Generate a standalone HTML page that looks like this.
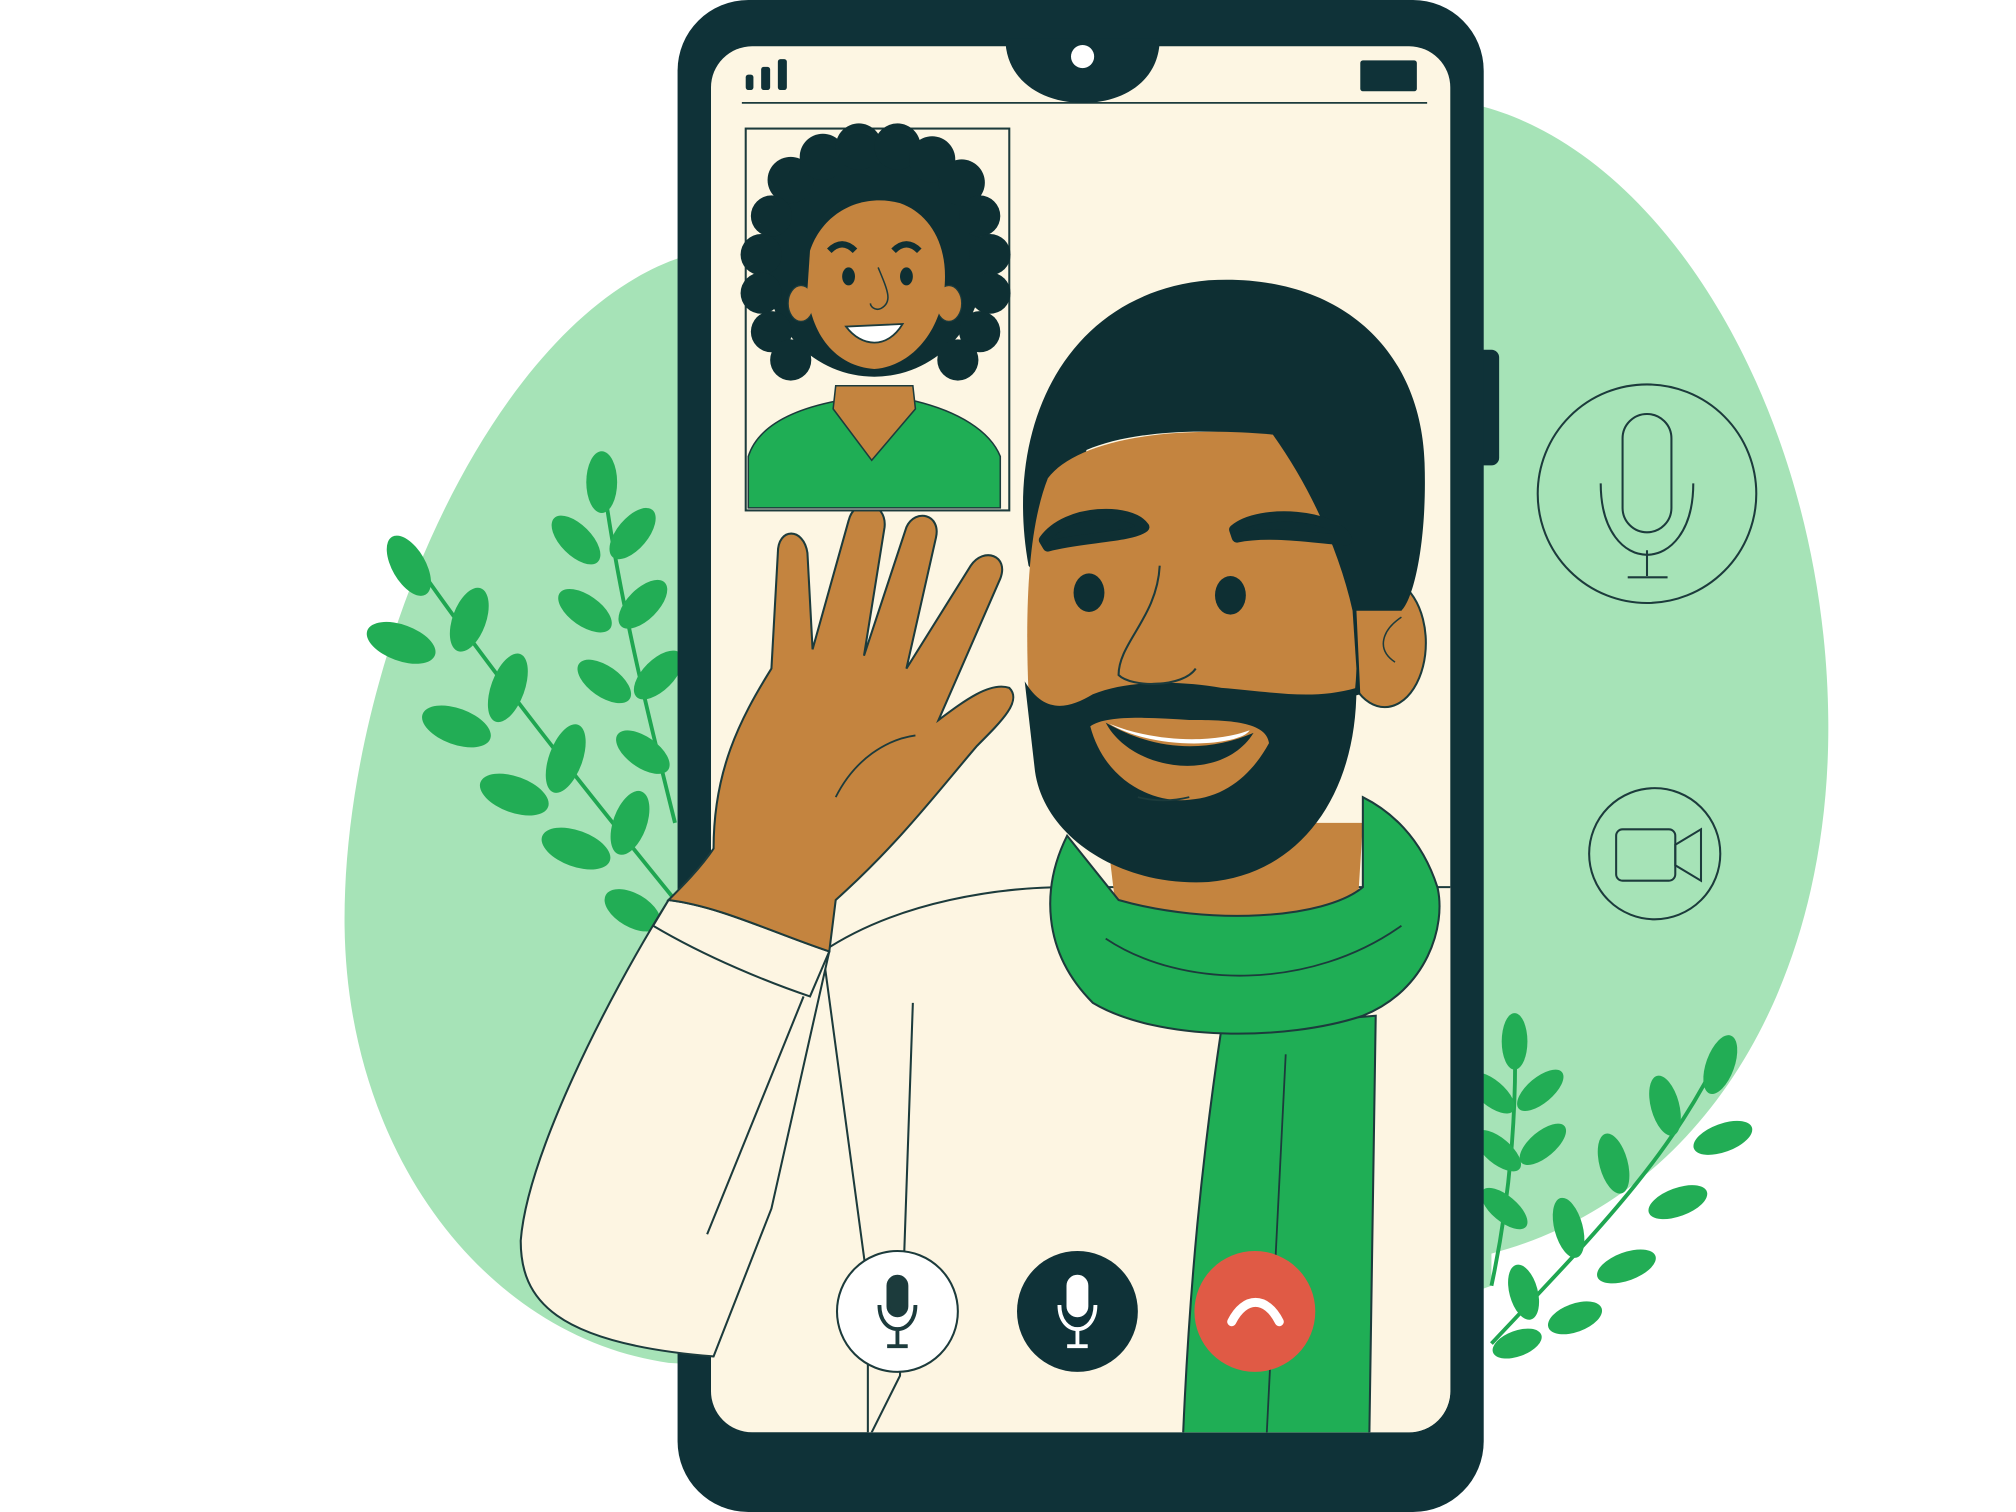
<!DOCTYPE html>
<html><head><meta charset="utf-8"><style>
html,body{margin:0;padding:0;background:#fff;width:2016px;height:1512px;overflow:hidden}
svg{display:block}
</style></head><body>
<svg width="2016" height="1512" viewBox="0 0 1568 1176" preserveAspectRatio="none" xmlns="http://www.w3.org/2000/svg">
<rect width="1568" height="1176" fill="#fff"/>
<path d="M1150,82 C1300,120 1420,330 1422,560 C1424,760 1330,930 1160,975 L1160,1000 C1000,1060 700,1070 520,1060 C380,1040 270,900 268,720 C266,520 380,250 530,200 L1150,82 Z" fill="#a6e3b7"/>
<g stroke="#1fa651" stroke-width="3" fill="none">
<path d="M525,700 C460,620 380,520 318,430"/>
<path d="M525,640 C505,560 480,460 468,365"/>
<path d="M1160,1045 C1240,960 1300,900 1340,815"/>
<path d="M1160,1000 C1175,930 1180,860 1178,800"/>
</g>
<g fill="#22ad55">
<ellipse cx="318" cy="440" rx="13" ry="26" transform="rotate(-30 318 440)"/>
<ellipse cx="312" cy="500" rx="14" ry="28" transform="rotate(-70 312 500)"/>
<ellipse cx="365" cy="482" rx="13" ry="26" transform="rotate(20 365 482)"/>
<ellipse cx="355" cy="565" rx="14" ry="28" transform="rotate(-70 355 565)"/>
<ellipse cx="395" cy="535" rx="13" ry="28" transform="rotate(20 395 535)"/>
<ellipse cx="400" cy="618" rx="14" ry="28" transform="rotate(-70 400 618)"/>
<ellipse cx="440" cy="590" rx="13" ry="28" transform="rotate(20 440 590)"/>
<ellipse cx="448" cy="660" rx="14" ry="28" transform="rotate(-70 448 660)"/>
<ellipse cx="490" cy="640" rx="13" ry="26" transform="rotate(20 490 640)"/>
<ellipse cx="492" cy="708" rx="13" ry="24" transform="rotate(-60 492 708)"/>
<ellipse cx="468" cy="375" rx="12" ry="24"/>
<ellipse cx="448" cy="420" rx="12" ry="24" transform="rotate(-45 448 420)"/>
<ellipse cx="492" cy="415" rx="12" ry="24" transform="rotate(40 492 415)"/>
<ellipse cx="455" cy="475" rx="12" ry="24" transform="rotate(-55 455 475)"/>
<ellipse cx="500" cy="470" rx="12" ry="24" transform="rotate(45 500 470)"/>
<ellipse cx="470" cy="530" rx="12" ry="24" transform="rotate(-55 470 530)"/>
<ellipse cx="512" cy="525" rx="12" ry="24" transform="rotate(45 512 525)"/>
<ellipse cx="500" cy="585" rx="12" ry="24" transform="rotate(-55 500 585)"/>
<ellipse cx="1178" cy="810" rx="10" ry="22"/>
<ellipse cx="1160" cy="850" rx="10" ry="22" transform="rotate(-50 1160 850)"/>
<ellipse cx="1198" cy="848" rx="10" ry="22" transform="rotate(50 1198 848)"/>
<ellipse cx="1165" cy="895" rx="10" ry="22" transform="rotate(-50 1165 895)"/>
<ellipse cx="1200" cy="890" rx="10" ry="22" transform="rotate(50 1200 890)"/>
<ellipse cx="1170" cy="940" rx="10" ry="22" transform="rotate(-50 1170 940)"/>
<ellipse cx="1338" cy="828" rx="11" ry="24" transform="rotate(20 1338 828)"/>
<ellipse cx="1340" cy="885" rx="11" ry="24" transform="rotate(70 1340 885)"/>
<ellipse cx="1295" cy="860" rx="11" ry="24" transform="rotate(-15 1295 860)"/>
<ellipse cx="1305" cy="935" rx="11" ry="24" transform="rotate(70 1305 935)"/>
<ellipse cx="1255" cy="905" rx="11" ry="24" transform="rotate(-15 1255 905)"/>
<ellipse cx="1265" cy="985" rx="11" ry="24" transform="rotate(70 1265 985)"/>
<ellipse cx="1220" cy="955" rx="11" ry="24" transform="rotate(-15 1220 955)"/>
<ellipse cx="1225" cy="1025" rx="11" ry="22" transform="rotate(70 1225 1025)"/>
<ellipse cx="1185" cy="1005" rx="11" ry="22" transform="rotate(-15 1185 1005)"/>
<ellipse cx="1180" cy="1045" rx="10" ry="20" transform="rotate(70 1180 1045)"/>
</g>
<g fill="none" stroke="#1c3b3c" stroke-width="1.6">
<circle cx="1281" cy="384" r="85"/>
<rect x="1262" y="322" width="38" height="92" rx="19"/>
<path d="M1245,376 C1245,450 1317,450 1317,376"/>
<path d="M1281,428 L1281,448 M1266,449 L1297,449"/>
<circle cx="1287" cy="664" r="51"/>
<rect x="1257" y="645" width="46" height="40" rx="5"/>
<path d="M1303,657 L1323,645 L1323,685 L1303,673 Z"/>
</g>
<rect x="1148" y="272" width="18" height="90" rx="6" fill="#0f3238"/>
<rect x="527" y="0" width="627" height="1176" rx="55" fill="#0f3238"/>
<defs><clipPath id="scr"><rect x="553" y="36" width="575" height="1078" rx="32"/></clipPath></defs>
<rect x="553" y="36" width="575" height="1078" rx="32" fill="#fdf6e3"/>
<g clip-path="url(#scr)">
<path d="M640,740 C700,700 780,690 830,690 L1130,690 L1130,1120 L675,1120 L675,1000 Z" fill="#fdf5e2" stroke="#1c3b3c" stroke-width="1.6"/>
<path d="M675,1120 L700,1070 L710,780" fill="none" stroke="#1c3b3c" stroke-width="1.6"/>
<path d="M950,800 L1070,790 L1065,1120 L920,1120 C925,1000 935,900 950,800 Z" fill="#1fae55" stroke="#1c3b3c" stroke-width="1.6"/>
<path d="M1000,820 L985,1120" stroke="#1c3b3c" stroke-width="1.4"/>
<path d="M860,640 L1060,640 L1055,720 C1000,740 920,745 870,725 Z" fill="#c4843f"/>
<path d="M870,700 C930,720 1000,720 1050,700 L1050,720 C1000,740 920,740 870,725 Z" fill="#a86a2f"/>
<path d="M830,650 C810,690 810,740 850,780 C900,810 1000,810 1060,790 C1110,770 1125,720 1118,690 C1105,650 1080,630 1060,620 L1060,690 C1030,715 940,720 870,700 Z" fill="#1fae55" stroke="#1c3b3c" stroke-width="1.6"/>
<path d="M860,730 C920,770 1020,770 1090,720" fill="none" stroke="#1c3b3c" stroke-width="1.4"/>
<ellipse cx="1077" cy="500" rx="32" ry="50" fill="#c4843f" stroke="#1c3b3c" stroke-width="1.6"/>
<path d="M1090,480 C1075,490 1070,505 1085,515" fill="none" stroke="#1c3b3c" stroke-width="1.2"/>
<!-- hair -->
<path d="M800,440 C780,330 830,228 940,218 C1040,212 1105,270 1108,360 C1110,420 1100,465 1090,475 L1055,475 L1058,540 L1040,545 L1030,430 C1020,390 1005,360 990,340 C940,332 880,335 845,350 L825,470 Z" fill="#0e2f33"/>
<!-- face -->
<path d="M815,372 C835,345 900,330 990,338 C1020,380 1042,430 1052,475 L1055,520 C1052,610 1000,680 930,685 C860,685 808,625 800,540 C797,470 800,410 815,372 Z" fill="#c4843f"/>
<!-- beard -->
<path d="M797,530 C812,555 830,552 850,540 C880,528 920,530 950,535 C990,538 1020,545 1055,535 C1055,620 1010,680 940,686 C870,690 812,650 805,600 Z" fill="#0e2f33"/>
<path d="M848,565 C860,610 900,625 925,622 C955,620 975,600 987,578 C985,560 950,560 925,560 C895,558 860,556 848,565 Z" fill="#c4843f"/>
<path d="M860,562 C880,600 950,610 975,570 C940,585 900,585 860,562 Z" fill="#0e2f33"/>
<path d="M863,563 C900,578 945,578 972,568 C965,580 900,585 863,563 Z" fill="#fff"/>
<path d="M885,620 Q905,625 925,620" stroke="#1c3b3c" stroke-width="1.4" fill="none"/>
<path d="M812,420 C830,395 880,395 890,410 C880,418 840,418 815,425 Z" fill="#0e2f33" stroke="#0e2f33" stroke-width="8" stroke-linejoin="round"/>
<path d="M960,412 C980,395 1040,400 1048,420 C1030,420 990,412 962,418 Z" fill="#0e2f33" stroke="#0e2f33" stroke-width="8" stroke-linejoin="round"/>
<ellipse cx="847" cy="461" rx="12" ry="15" fill="#0e2f33"/>
<ellipse cx="957" cy="463" rx="12" ry="15" fill="#0e2f33"/>
<path d="M902,440 C900,480 870,500 870,525 C880,535 920,535 930,520" fill="none" stroke="#1c3b3c" stroke-width="1.6"/>
</g>
<!-- arm (overlaps phone frame) -->
<path d="M520,700 C470,780 410,900 405,965 C405,1010 430,1045 555,1055 L600,940 L645,740 C610,720 560,705 520,700 Z" fill="#fdf5e2" stroke="#1c3b3c" stroke-width="1.6"/>
<path d="M520,700 L508,720 C550,745 600,765 630,775 L645,740 C600,725 560,705 520,700 Z" fill="#fdf5e2" stroke="#1c3b3c" stroke-width="1.6"/>
<path d="M550,960 L625,775" stroke="#1c3b3c" stroke-width="1.6"/>
<path d="M555,660 C555,600 575,560 600,520 L605,430 C605,410 625,410 628,430 L632,505 L660,405 C665,385 690,390 688,410 L672,510 L705,410 C712,395 732,400 728,418 L705,520 L755,440 C765,425 785,432 778,450 L730,560 C750,545 770,530 785,535 C795,545 780,560 760,580 C730,615 700,655 650,700 L645,740 C600,725 560,705 520,700 C530,690 545,675 555,660 Z" fill="#c4843f" stroke="#1c3b3c" stroke-width="1.6"/>
<path d="M650,620 C665,590 690,575 712,572" fill="none" stroke="#1c3b3c" stroke-width="1.4"/>
<!-- small frame -->
<rect x="580" y="100" width="205" height="297" fill="#fdf6e3" stroke="#1c3b3c" stroke-width="1.6"/>
<g>
<path d="M582,355 C590,330 620,318 650,312 L712,312 C745,320 770,335 778,355 L778,395 L582,395 Z" fill="#1fae55" stroke="#1c3b3c" stroke-width="1.2"/>
<path d="M650,300 L710,300 L712,318 L678,358 L648,318 Z" fill="#c4843f" stroke="#1c3b3c" stroke-width="1.2"/>
<g fill="#0e2f33">
<ellipse cx="680" cy="205" rx="85" ry="88"/>
<circle cx="615" cy="140" r="18"/><circle cx="640" cy="122" r="18"/><circle cx="668" cy="114" r="18"/><circle cx="698" cy="114" r="18"/><circle cx="725" cy="124" r="18"/><circle cx="748" cy="142" r="18"/>
<circle cx="762" cy="168" r="16"/><circle cx="770" cy="198" r="16"/><circle cx="770" cy="228" r="16"/><circle cx="762" cy="258" r="16"/><circle cx="745" cy="280" r="16"/>
<circle cx="600" cy="168" r="16"/><circle cx="592" cy="198" r="16"/><circle cx="592" cy="228" r="16"/><circle cx="600" cy="258" r="16"/><circle cx="615" cy="280" r="16"/>
</g>
<ellipse cx="623" cy="236" rx="10" ry="14" fill="#c4843f" stroke="#1c3b3c" stroke-width="1"/>
<ellipse cx="738" cy="236" rx="10" ry="14" fill="#c4843f" stroke="#1c3b3c" stroke-width="1"/>
<path d="M630,195 C640,165 670,150 700,158 C720,165 735,185 735,215 C735,255 710,285 680,287 C650,285 630,260 628,225 Z" fill="#c4843f"/>
<path d="M645,195 Q655,185 665,195 M695,195 Q705,185 715,195" stroke="#0e2f33" stroke-width="5" fill="none"/>
<ellipse cx="660" cy="215" rx="5" ry="7" fill="#0e2f33"/><ellipse cx="705" cy="215" rx="5" ry="7" fill="#0e2f33"/>
<path d="M683,208 C690,225 695,235 685,240 C680,242 677,238 677,236" stroke="#1c3b3c" stroke-width="1.2" fill="none"/>
<path d="M658,254 C670,270 690,272 702,252 Z" fill="#fff" stroke="#1c3b3c" stroke-width="1.4"/>
</g>
<rect x="580" y="58" width="6" height="12" rx="2" fill="#0f3238"/>
<rect x="592" y="52" width="7" height="18" rx="2" fill="#0f3238"/>
<rect x="605" y="46" width="7" height="24" rx="2" fill="#0f3238"/>
<rect x="1058" y="47" width="44" height="24" rx="2" fill="#0f3238"/>
<line x1="577" y1="80" x2="1110" y2="80" stroke="#1c3b3c" stroke-width="1.4"/>
<path d="M782,30 L902,30 C902,62 875,80 842,80 C810,80 782,62 782,30 Z" fill="#0f3238"/>
<circle cx="842" cy="44" r="9" fill="#fff"/>
<circle cx="698" cy="1020" r="47" fill="#fff" stroke="#1c3b3c" stroke-width="1.6"/>
<g fill="none" stroke="#1c3b3c" stroke-width="3"><rect x="691" y="993" width="14" height="30" rx="7" fill="#1c3b3c"/><path d="M684,1015 C684,1040 712,1040 712,1015 M698,1035 L698,1046 M690,1047 L706,1047"/></g>
<circle cx="838" cy="1020" r="47" fill="#0f3238"/>
<g fill="none" stroke="#fff" stroke-width="3"><rect x="831" y="993" width="14" height="30" rx="7" fill="#fff"/><path d="M824,1015 C824,1040 852,1040 852,1015 M838,1035 L838,1046 M830,1047 L846,1047"/></g>
<circle cx="976" cy="1020" r="47" fill="#e05a45"/>
<path d="M958,1028 C968,1008 985,1008 995,1028" fill="none" stroke="#fff" stroke-width="7" stroke-linecap="round"/>
</svg>
</body></html>
